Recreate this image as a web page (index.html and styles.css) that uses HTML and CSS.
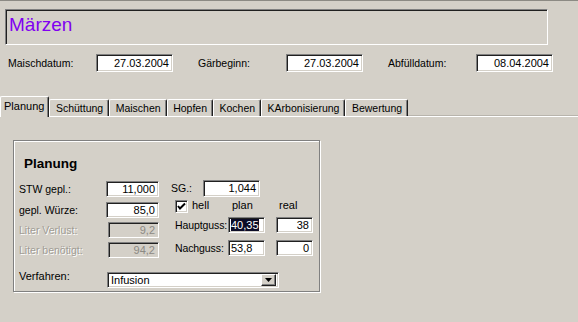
FILE: index.html
```html
<!DOCTYPE html>
<html>

<head>
    <meta charset="UTF-8">
    <title>Märzen</title>
    <link rel="stylesheet" href="styles.css">
</head>

<body>
    <div id="title" class="sunken">Märzen</div>

    <div id="dates">
        <span class="label date-label">Maischdatum:</span>
        <span class="field sunken date-field">27.03.2004</span>
        <span class="label date-label gap">Gärbeginn:</span>
        <span class="field sunken date-field">27.03.2004</span>
        <span class="label date-label gap">Abfülldatum:</span>
        <span class="field sunken date-field">08.04.2004</span>
    </div>

    <div id="tabs">
        <div class="tab active">Planung</div>
        <div class="tab">Schüttung</div>
        <div class="tab">Maischen</div>
        <div class="tab">Hopfen</div>
        <div class="tab">Kochen</div>
        <div class="tab">KArbonisierung</div>
        <div class="tab">Bewertung</div>
    </div>

    <div id="group">
        <div class="group-title">Planung</div>
        <div class="group-body">
            <div class="left">
                <div class="row first">
                    <span class="label left-label">STW gepl.:</span>
                    <span class="field sunken left-field">11,000</span>
                </div>
                <div class="row">
                    <span class="label left-label">gepl. Würze:</span>
                    <span class="field sunken left-field">85,0</span>
                </div>
                <div class="row">
                    <span class="label left-label disabled">Liter Verlust:</span>
                    <span class="field sunken left-field disabled-field">9,2</span>
                </div>
                <div class="row">
                    <span class="label left-label disabled">Liter benötigt:</span>
                    <span class="field sunken left-field disabled-field">94,2</span>
                </div>
            </div>
            <div class="right">
                <div class="row">
                    <span class="label sg-label">SG.:</span>
                    <span class="field sunken sg-field">1,044</span>
                </div>
                <div class="row check-row">
                    <span class="checkbox sunken">
                        <svg width="9" height="9" viewBox="0 0 9 9">
                            <polyline points="1,4 3,6.5 8,1.5" fill="none" stroke="#000" stroke-width="2"/>
                        </svg>
                    </span>
                    <span class="label hell">hell</span>
                    <span class="label plan">plan</span>
                    <span class="label">real</span>
                </div>
                <div class="row guss-row">
                    <span class="label guss-label">Hauptguss:</span>
                    <span class="field sunken guss-field plain"><span class="selected">40,35</span></span>
                    <span class="field sunken guss-field real">38</span>
                </div>
                <div class="row guss-row second">
                    <span class="label guss-label">Nachguss:</span>
                    <span class="field sunken guss-field plain">53,8</span>
                    <span class="field sunken guss-field real">0</span>
                </div>
            </div>
        </div>
        <div class="row method">
            <span class="label method-label">Verfahren:</span>
            <span class="combo sunken">
                <span class="combo-text">Infusion</span>
                <span class="combo-button">
                    <svg width="7" height="4" viewBox="0 0 7 4"><polygon points="0,0 7,0 3.5,4" fill="#000"/></svg>
                </span>
            </span>
        </div>
    </div>
</body>

</html>
```

FILE: styles.css
```css
body {
    margin: 0;
    height: 321px;
    background: #d4d0c8;
    border-top: 1px solid #8c8a84;
    font-family: 'Liberation Sans', Arial, sans-serif;
    font-size: 10.5px;
    color: #000;
    overflow: hidden;
}

.sunken {
    box-sizing: border-box;
    border: 1px solid;
    border-color: #808080 #fff #fff #808080;
    box-shadow: inset 1px 1px #202020, inset -1px -1px #d4d0c8;
}

.label {
    white-space: nowrap;
}

.field {
    display: inline-block;
    background: #fff;
    text-align: right;
    padding: 0 3px;
    white-space: nowrap;
}

/* title */

#title {
    margin: 8px 30px 0 5px;
    height: 36px;
    padding: 2px 3px;
    color: #8000f0;
    font-size: 19px;
    line-height: 26px;
}

/* dates */

#dates {
    display: flex;
    align-items: center;
    margin-top: 9px;
    padding-left: 8px;
    height: 18px;
}

.date-label {
    width: 88px;
}

.date-label.gap {
    margin-left: 25px;
}

.date-field {
    width: 77px;
    height: 18px;
    line-height: 16px;
    font-size: 11px;
}

/* tabs */

#tabs {
    display: flex;
    align-items: flex-end;
    margin-top: 24px;
    height: 20px;
    border-bottom: 1px solid #fff;
    box-shadow: 0 -1px #b8b4ac inset;
}

.tab {
    box-sizing: border-box;
    height: 17px;
    padding: 1px 5px 0 5.5px;
    line-height: 15px;
    border: 1px solid;
    border-color: #fff #202020 transparent #fff;
    border-bottom: none;
    box-shadow: inset -1px 0 #808080;
    border-radius: 2px 2px 0 0;
    background: #d4d0c8;
}

.tab.active {
    height: 21px;
    margin-bottom: -1px;
    padding: 2px 4px 0 3px;
    border-left-color: #fff;
    font-size: 11px;
    position: relative;
}

/* group box */

#group {
    box-sizing: border-box;
    width: 307px;
    margin: 23px 0 0 13px;
    padding: 15px 0 3px 5px;
    border: 1px solid #808080;
    box-shadow: inset 1px 1px #fff, 1px 1px #fff;
}

.group-title {
    margin-left: 5px;
    font-size: 13.5px;
    font-weight: bold;
    line-height: 16px;
    margin-bottom: 8px;
}

.group-body {
    display: flex;
}

.row {
    display: flex;
    align-items: center;
}

.left {
    padding-top: 1px;
}

.left .row {
    height: 16px;
    margin-bottom: 4px;
}

.left .row.first {
    margin-bottom: 5px;
}

.left-label {
    width: 87px;
}

.left-field {
    width: 53px;
    height: 16px;
    line-height: 14px;
    font-size: 11px;
}

.disabled {
    color: #a09c94;
    text-shadow: 1px 1px #fff;
}

.disabled-field {
    background: #d4d0c8;
    color: #8c8a84;
    margin-left: 2px;
    width: 51px;
}

.right {
    margin-left: 12px;
}

.right .row {
    height: 16px;
}

.sg-label {
    width: 32px;
}

.sg-field {
    width: 57px;
    height: 17px;
    line-height: 15px;
    font-size: 11px;
}

.check-row {
    margin-top: 4px;
    padding-left: 4px;
}

.right .row.check-row {
    height: 13px;
}

.checkbox {
    display: flex;
    align-items: center;
    justify-content: center;
    width: 13px;
    height: 13px;
    background: #fff;
}

.hell {
    margin-left: 4px;
    width: 40px;
}

.plan {
    width: 47px;
}

.check-row .label {
    margin-top: -3px;
    font-size: 11px;
}

.guss-row {
    margin-top: 4px;
    padding-left: 4px;
}

.guss-row.second {
    margin-top: 7px;
}

.guss-label {
    width: 53px;
    font-size: 10.5px;
    letter-spacing: -0.1px;
}

.guss-field {
    width: 37px;
    height: 16px;
    line-height: 14px;
    font-size: 11px;
}

.guss-field.plain {
    text-align: left;
    padding-left: 2px;
}

.guss-field.real {
    margin-left: 11px;
}

.selected {
    background: #0c0c26;
    color: #fff;
}

/* combo */

.method {
    margin-top: 10px;
    height: 16px;
}

.method-label {
    width: 88px;
    margin-top: -8px;
    font-size: 11px;
}

.combo {
    display: flex;
    align-items: center;
    justify-content: space-between;
    width: 172px;
    height: 16px;
    padding: 2px;
    background: #fff;
}

.combo-text {
    padding-left: 1px;
    line-height: 12px;
    font-size: 11px;
}

.combo-button {
    box-sizing: border-box;
    display: flex;
    align-items: center;
    justify-content: center;
    width: 15px;
    height: 12px;
    background: #d4d0c8;
    border: 1px solid;
    border-color: #fff #202020 #202020 #fff;
    box-shadow: inset -1px -1px #808080;
}
```
